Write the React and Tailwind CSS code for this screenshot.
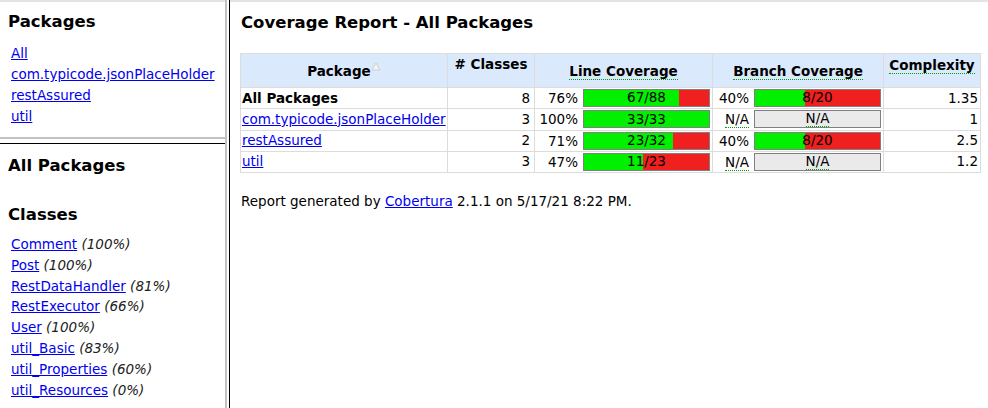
import React from 'react';

const font = { fontFamily: '"DejaVu Sans", Verdana, sans-serif' };

const packages = ['All', 'com.typicode.jsonPlaceHolder', 'restAssured', 'util'];

const classes = [
  ['Comment', '100%'],
  ['Post', '100%'],
  ['RestDataHandler', '81%'],
  ['RestExecutor', '66%'],
  ['User', '100%'],
  ['util_Basic', '83%'],
  ['util_Properties', '60%'],
  ['util_Resources', '0%'],
];

const rows = [
  { name: 'All Packages', bold: true, classes: 8, line: [76, '67/88'], branch: [40, '8/20'], cx: '1.35' },
  { name: 'com.typicode.jsonPlaceHolder', classes: 3, line: [100, '33/33'], branch: null, cx: '1' },
  { name: 'restAssured', classes: 2, line: [71, '23/32'], branch: [40, '8/20'], cx: '2.5' },
  { name: 'util', classes: 3, line: [47, '11/23'], branch: null, cx: '1.2' },
];

function Bar({ pct, label }) {
  return (
    <div className="relative w-[127px] h-[18px] border border-[#808080] bg-[#f02020] flex">
      <div className="h-full bg-[#00f000]" style={{ width: `${pct}%` }} />
      <span className="absolute inset-0 flex items-center justify-center text-black leading-none">{label}</span>
    </div>
  );
}

function NaBar() {
  return (
    <div className="w-[127px] h-[18px] border border-[#808080] bg-[#eaeaea] flex items-center justify-center">
      <span className="leading-[15px] border-b border-dotted border-[#00a000]">N/A</span>
    </div>
  );
}

function Cover({ data, pw }) {
  return (
    <div className="flex items-center">
      <div className={`${pw} text-right`}>
        {data ? `${data[0]}%` : <span className="border-b border-dotted border-[#00a000] leading-[15px] inline-block">N/A</span>}
      </div>
      <div className="ml-[5px]">{data ? <Bar pct={data[0]} label={data[1]} /> : <NaBar />}</div>
    </div>
  );
}

export default function App() {
  return (
    <div className="flex w-[988px] h-[408px] bg-white text-[13.5px] text-black overflow-hidden" style={font}>
      {/* left frames */}
      <div className="w-[225px] flex flex-col border-t-2 border-[#e3e3e3]">
        <div className="h-[135px] px-[8px] pt-[10px]">
          <h2 className="text-[16.5px] font-bold leading-[20px] mb-[11px]">Packages</h2>
          <ul className="pl-[3px]">
            {packages.map((p) => (
              <li key={p} className="leading-[21px]">
                <a href="#" className="text-[#0000ee] underline">{p}</a>
              </li>
            ))}
          </ul>
        </div>
        <div className="h-[2px] bg-[#c2c2c2]" />
        <div className="h-[4px] bg-white" />
        <div className="flex-1 border-t border-black px-[8px] pt-[12px]">
          <h2 className="text-[16.5px] font-bold leading-[20px]">All Packages</h2>
          <h2 className="text-[16.5px] font-bold leading-[20px] mt-[29px] mb-[9px]">Classes</h2>
          <ul className="pl-[3px]">
            {classes.map(([c, p]) => (
              <li key={c} className="leading-[20.8px]">
                <a href="#" className="text-[#0000ee] underline">{c}</a> <i className="text-[#222]">({p})</i>
              </li>
            ))}
          </ul>
        </div>
      </div>

      {/* frame splitter */}
      <div className="w-[2px] bg-[#c2c2c2]" />
      <div className="w-[2px] bg-white" />
      <div className="w-[1px] bg-black" />

      {/* right frame */}
      <div className="flex-1 border-t-2 border-[#e3e3e3] pl-[10px] pt-[11px]">
        <h1 className="text-[16.5px] font-bold leading-[20px] ml-[1px]">Coverage Report - All Packages</h1>
        <table className="mt-[20px] border-collapse w-[740px] table-fixed">
          <thead>
            <tr className="h-[34px] bg-[#dbe9fc]">
              <th className="w-[207px] border border-[#dcdcdc] font-bold align-middle pt-[2px]">
                <span className="inline-flex items-start">
                  Package
                  <svg width="10" height="9" viewBox="0 0 10 9" className="mt-[1px]">
                    <path d="M5 1 L9 8 L1 8 Z" fill="#f4f4f4" stroke="#cfcfcf" strokeWidth="1" />
                  </svg>
                </span>
              </th>
              <th className="w-[87px] border border-[#dcdcdc] font-bold align-top pt-[1px] leading-[18px]"># Classes</th>
              <th className="w-[178px] border border-[#dcdcdc] font-bold align-middle pt-[2px]">
                <span className="border-b border-dotted border-[#00a000] inline-block leading-[16px]">Line Coverage</span>
              </th>
              <th className="w-[171px] border border-[#dcdcdc] font-bold align-middle pt-[2px]">
                <span className="border-b border-dotted border-[#00a000] inline-block leading-[16px]">Branch Coverage</span>
              </th>
              <th className="w-[97px] border border-[#dcdcdc] font-bold align-top pt-[1px]">
                <span className="border-b border-dotted border-[#00a000] inline-block leading-[16px]">Complexity</span>
              </th>
            </tr>
          </thead>
          <tbody>
            {rows.map((r) => (
              <tr key={r.name} className="h-[21px]">
                <td className="border border-[#dcdcdc] px-[1px] leading-[17px] whitespace-nowrap">
                  {r.bold ? (
                    <b>{r.name}</b>
                  ) : (
                    <a href="#" className="text-[#0000ee] underline">{r.name}</a>
                  )}
                </td>
                <td className="border border-[#dcdcdc] text-right pr-[4px] leading-[17px]">{r.classes}</td>
                <td className="border border-[#dcdcdc] p-0">
                  <Cover data={r.line} pw="w-[43px]" />
                </td>
                <td className="border border-[#dcdcdc] p-0">
                  <Cover data={r.branch} pw="w-[36px]" />
                </td>
                <td className="border border-[#dcdcdc] text-right pr-[2px] leading-[17px]">{r.cx}</td>
              </tr>
            ))}
          </tbody>
        </table>
        <p className="mt-[18px] ml-[1px]">
          Report generated by <a href="#" className="text-[#0000ee] underline">Cobertura</a> 2.1.1 on 5/17/21 8:22 PM.
        </p>
      </div>
    </div>
  );
}
